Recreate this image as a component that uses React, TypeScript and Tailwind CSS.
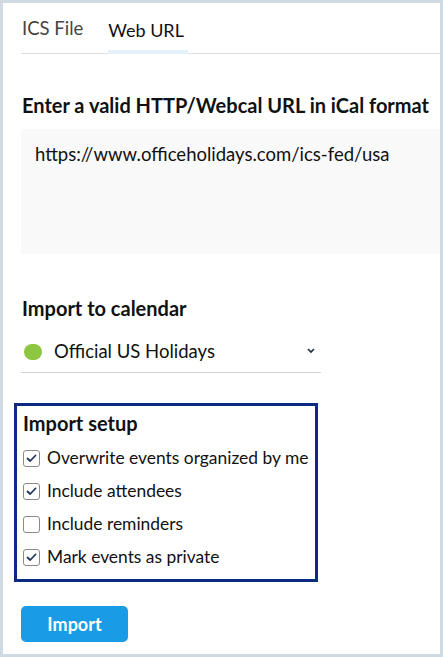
import React from 'react'

const options = [
    { label: 'Overwrite events organized by me', checked: true },
    { label: 'Include attendees', checked: true },
    { label: 'Include reminders', checked: false },
    { label: 'Mark events as private', checked: true },
]

function Checkbox({ checked }: { checked: boolean }) {
    return (
        <span className="w-[17px] h-[17px] rounded-[3px] border border-[#8a8a8a] bg-white flex items-center justify-center shrink-0">
            {checked && (
                <svg width="11" height="9" viewBox="0 0 11 9" fill="none">
                    <path d="M1.5 4.5 L4.2 7 L9.5 1.5" stroke="#1f3560" strokeWidth="1.8" strokeLinecap="round" strokeLinejoin="round" />
                </svg>
            )}
        </span>
    )
}

export default function App() {
    return (
        <div className="h-[657px] bg-[#cfdae3] p-[3px]" style={{ fontFamily: 'Lato, "Open Sans", sans-serif' }}>
            <div className="h-full bg-white pl-[18px] flex flex-col">
                {/* tabs */}
                <div className="flex border-b border-[#dcdcdc] h-[51px] pl-[1px] gap-[25px]">
                    <div className="flex items-end pb-[10px] text-[18.5px] text-[#444]">ICS File</div>
                    <div className="flex items-end pb-[10px] text-[18px] text-[#111] border-b-[4px] border-[#e4f1fb] -mb-[1px] w-[80px]">
                        <span className="mb-[-4px]">Web URL</span>
                    </div>
                </div>

                <h2 className="mt-[39px] text-[20px] font-bold text-[#111] leading-[24px] pl-[1px]">
                    Enter a valid HTTP/Webcal URL in iCal format
                </h2>
                <div className="mt-[12px] h-[125px] bg-[#f9f9f9] pl-[14px] pt-[13px] text-[18.5px] text-[#111] leading-[24px]">
                    https://www.officeholidays.com/ics-fed/usa
                </div>

                <h3 className="mt-[42px] text-[20px] font-bold text-[#111] leading-[24px] pl-[1px]">Import to calendar</h3>
                <div className="mt-[13px] w-[300px] h-[40px] border-b border-[#d4d4d4] flex items-center pl-[3px] pb-[1px]">
                    <span className="w-[18px] h-[16px] rounded-full bg-[#8dc63f]" />
                    <span className="ml-[12px] text-[18.5px] text-[#111] flex-1">Official US Holidays</span>
                    <svg width="10" height="7" viewBox="0 0 10 7" className="mr-[5px] mb-[4px]">
                        <path d="M2 2 L5 5 L8 2" stroke="#1f2a44" strokeWidth="1.6" fill="none" />
                    </svg>
                </div>

                <div className="mt-[30px] -ml-[7px] w-[304px] h-[179px] border-[3px] border-[#0b2a83] pl-[6px] pt-[5px]">
                    <div className="text-[20px] font-bold text-[#111] leading-[24px]">Import setup</div>
                    <div className="mt-[12px] flex flex-col gap-[11px]">
                        {options.map((o) => (
                            <label key={o.label} className="flex items-center gap-[7px] h-[22px] text-[17.4px] text-[#111]">
                                <Checkbox checked={o.checked} />
                                {o.label}
                            </label>
                        ))}
                    </div>
                </div>

                <button className="mt-[24px] w-[107px] h-[36px] rounded-[5px] bg-[#1a9be6] text-white font-bold text-[18px]">
                    Import
                </button>
            </div>
        </div>
    )
}
